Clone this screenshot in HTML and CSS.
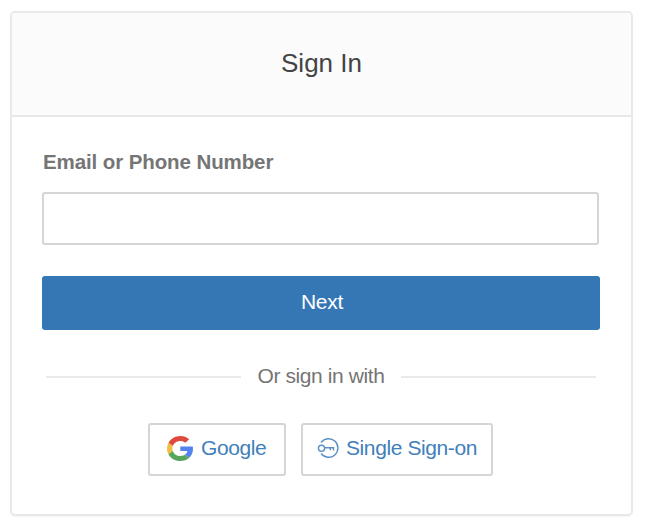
FILE: index.html
```
<!DOCTYPE html>
<html lang="en">
   <head>
      <meta charset="UTF-8">
      <meta name="viewport" content="width=device-width, initial-scale=1.0"/>
      <title>Sign In</title>
      <link rel="stylesheet" href="styles.css">
   </head>
   <body>
      <main class="card">
         <header class="card-header">
            <h1>Sign In</h1>
         </header>

         <form class="card-body" action="">
            <label for="login">Email or Phone Number</label>
            <input type="text" id="login" name="login" />

            <button type="submit" class="button-next">Next</button>

            <div class="separator"><span>Or sign in with</span></div>

            <div class="buttons-wrapper">
               <button type="button" class="button-provider button-google">
                  <svg class="icon-google" viewBox="0 0 47 48" preserveAspectRatio="none" aria-hidden="true">
                     <path fill="#dd4b3e" d="M24 9.500c3.500 0 6.700 1.200 9.200 3.600l6.900-6.900C35.900 2.400 30.500 0 24 0 14.600 0 6.500 5.400 2.600 13.200l8 6.200C12.400 13.700 17.700 9.500 24 9.500z"/>
                     <path fill="#5383ec" d="M47 24.600c0-1.600-.2-3.100-.4-4.600H24v9h12.900c-.6 3-2.200 5.500-4.700 7.200l7.700 6C44.400 38 47 31.800 47 24.600z"/>
                     <path fill="#f3bd42" d="M10.500 28.600c-.5-1.500-.8-3-.8-4.600s.3-3.100.8-4.600l-8-6.200C.9 16.500 0 20.100 0 24s.9 7.500 2.600 10.800z"/>
                     <path fill="#58a55c" d="M24 48c6.500 0 11.900-2.100 15.900-5.800l-7.700-6c-2.200 1.500-4.900 2.300-8.200 2.300-6.300 0-11.600-4.200-13.500-9.900l-7.900 6.200C6.500 42.600 14.600 48 24 48z"/>
                  </svg>
                  <span>Google</span>
               </button>
               <button type="button" class="button-provider button-sso">
                  <svg class="icon-key" viewBox="0 0 22 22" aria-hidden="true">
                     <path d="M4.100 5.500A9.300 9.300 0 1 1 4.100 16.500"/>
                     <circle cx="4.500" cy="11.300" r="3.100"/>
                     <path d="M7.600 10.800H16.500V13.500M13.300 10.800V13.200"/>
                  </svg>
                  <span>Single Sign-on</span>
               </button>
            </div>
         </form>
      </main>
   </body>
</html>
```
FILE: styles.css
```
*
{
   box-sizing: border-box;
}

body
{
   margin: 0;
   padding: 11px 15px 13px 10px;
   background: #ffffff;
   color: #757575;
   font-family: "Liberation Sans", Arial, sans-serif;
   font-size: 21px;
}

.card
{
   height: 505px;
   border: 2px solid #e9e9e9;
   border-radius: 5px;
   overflow: hidden;
   box-shadow: 0 1px 1px #f5f5f5;
}

.card-header
{
   display: flex;
   align-items: center;
   justify-content: center;
   height: 104px;
   padding-bottom: 3px;
   border-bottom: 2px solid #e7e7e7;
   background: #fbfbfb;
}

h1
{
   margin: 0;
   color: #444444;
   font-size: 26px;
   font-weight: normal;
   line-height: 30px;
}

.card-body
{
   display: flex;
   flex-direction: column;
   padding: 31px 32px 0 30px;
}

label
{
   padding-left: 1px;
   font-size: 20.5px;
   font-weight: bold;
   line-height: 28px;
   letter-spacing: -0.1px;
}

input[name="login"]
{
   width: 557px;
   height: 53px;
   margin: 16px 0 31px;
   padding: 0 12px;
   border: 2px solid #d5d5d5;
   border-radius: 3px;
   background: #ffffff;
   font: inherit;
}

.button-next
{
   width: 558px;
   height: 54px;
   padding: 0 0 2px 2px;
   border: 0;
   border-radius: 3px;
   background: #3577b5;
   color: #ffffff;
   font: inherit;
   letter-spacing: -0.3px;
}

.separator
{
   display: flex;
   align-items: center;
   gap: 16px;
   width: 550px;
   height: 28px;
   margin: 32px 0 0 4px;
   letter-spacing: -0.4px;
}

.separator:before,
.separator:after
{
   content: "";
   flex: 1;
   height: 2px;
   margin-top: 2px;
   background: #eaeaea;
}

.buttons-wrapper
{
   display: flex;
   gap: 15px;
   margin: 33px 0 0 106px;
}

.button-provider
{
   display: flex;
   align-items: center;
   height: 53px;
   padding: 0 0 3px;
   border: 2px solid #d5d5d5;
   border-radius: 3px;
   background: #ffffff;
   color: #4180bb;
   font: inherit;
   letter-spacing: -0.4px;
   white-space: nowrap;
}

.button-google
{
   width: 138px;
   padding-left: 17px;
}

.button-sso
{
   width: 192px;
   padding-left: 14px;
}

.icon-google
{
   width: 26px;
   height: 25px;
   margin-right: 8px;
}

.icon-key
{
   width: 22px;
   height: 22px;
   margin-right: 7px;
   fill: none;
   stroke: #5b8fc4;
   stroke-width: 1.4;
}
```
